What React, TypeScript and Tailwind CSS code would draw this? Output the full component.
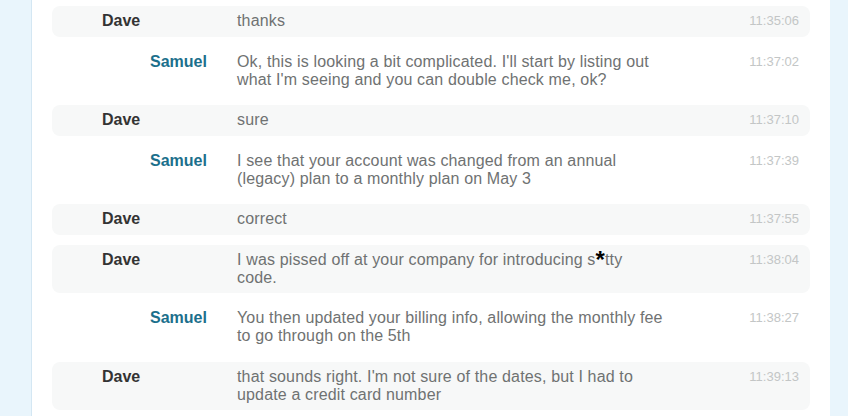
import React from "react";

type Msg = {
	from: "Dave" | "Samuel";
	text: React.ReactNode;
	time: string;
};

const messages: Msg[] = [
	{ from: "Dave", text: "thanks", time: "11:35:06" },
	{
		from: "Samuel",
		text: "Ok, this is looking a bit complicated. I'll start by listing out what I'm seeing and you can double check me, ok?",
		time: "11:37:02",
	},
	{ from: "Dave", text: "sure", time: "11:37:10" },
	{
		from: "Samuel",
		text: "I see that your account was changed from an annual (legacy) plan to a monthly plan on May 3",
		time: "11:37:39",
	},
	{ from: "Dave", text: "correct", time: "11:37:55" },
	{
		from: "Dave",
		text: (
			<>
				I was pissed off at your company for introducing s
				<span className="inline-block h-[18px] align-top text-[24px] leading-[18px] font-bold text-black">*</span>
				tty code.
			</>
		),
		time: "11:38:04",
	},
	{
		from: "Samuel",
		text: "You then updated your billing info, allowing the monthly fee to go through on the 5th",
		time: "11:38:27",
	},
	{
		from: "Dave",
		text: "that sounds right. I'm not sure of the dates, but I had to update a credit card number",
		time: "11:39:13",
	},
];

const Row = ({ msg }: { msg: Msg }) => {
	const isDave = msg.from === "Dave";
	return (
		<div
			className={`flex items-start rounded-lg py-[6.25px] leading-[18px] ${
				isDave ? "bg-[#f7f8f8]" : ""
			}`}
		>
			<div className="w-[185px] shrink-0">
				{isDave ? (
					<div className="pl-[50px] font-bold text-[#333333]">Dave</div>
				) : (
					<div className="pl-[98px] font-bold text-[#1c6f8c]">Samuel</div>
				)}
			</div>
			<div className="w-[427px] tracking-[0.15px] text-[#6f7272]">{msg.text}</div>
			<div className="ml-auto pr-[11px] text-[13px] text-[#c3c6c6]">{msg.time}</div>
		</div>
	);
};

export default function App() {
	return (
		<div
			className="flex h-[416px] w-[848px] overflow-hidden bg-[#e9f5fc] pl-[31px] pr-[18px] text-[16px]"
			style={{ fontFamily: '"Liberation Sans", Arial, sans-serif' }}
		>
			<div className="flex flex-1 flex-col gap-[10px] border-l border-[#d4e7f3] bg-white px-[20px] pt-[6px]">
				{messages.map((m, i) => (
					<Row key={i} msg={m} />
				))}
			</div>
		</div>
	);
}
